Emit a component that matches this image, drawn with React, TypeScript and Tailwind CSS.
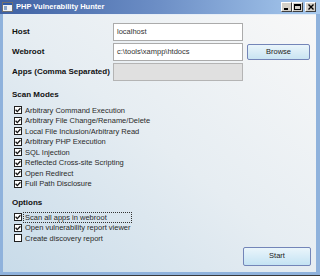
import { useState } from "react";

type Option = {
    label: string;
    checked: boolean;
};

const scanModes: Option[] = [
    { label: "Arbitrary Command Execution", checked: true },
    { label: "Arbitrary File Change/Rename/Delete", checked: true },
    { label: "Local File Inclusion/Arbitrary Read", checked: true },
    { label: "Arbitrary PHP Execution", checked: true },
    { label: "SQL Injection", checked: true },
    { label: "Reflected Cross-site Scripting", checked: true },
    { label: "Open Redirect", checked: true },
    { label: "Full Path Disclosure", checked: true },
];

const options: Option[] = [
    { label: "Scan all apps in webroot", checked: true },
    { label: "Open vulnerability report viewer", checked: true },
    { label: "Create discovery report", checked: false },
];

const CheckRow = ({ label, checked, focused, onToggle }: { label: string; checked: boolean; focused?: boolean; onToggle: () => void }) => (
    <div className="flex items-center h-[10.5px] cursor-default" onClick={onToggle}>
        <div className="w-[8px] h-[8px] border border-[#1f1f1f] bg-white flex items-center justify-center shrink-0">
            {checked && (
                <svg width="6" height="6" viewBox="0 0 6 6">
                    <path d="M0.6 2.8 L2.3 4.6 L5.4 1.2" stroke="#111" strokeWidth="1.3" fill="none" />
                </svg>
            )}
        </div>
        <span
            className={`ml-[2px] px-[1px] leading-[9px] text-[7.5px] text-[#2a2a2a] ${focused ? "outline-1 outline-dotted outline-[#333] pr-[24px]" : ""}`}
        >
            {label}
        </span>
    </div>
);

const WinButton = ({ children }: { children: React.ReactNode }) => (
    <div className="w-[11px] h-[10px] bg-[#d4d0c8] border border-t-white border-l-white border-r-[#404040] border-b-[#404040] flex items-center justify-center">
        {children}
    </div>
);

const App = () => {
    const [modes, setModes] = useState(scanModes);
    const [opts, setOpts] = useState(options);

    return (
        <div className="w-[320px] h-[276px] flex flex-col bg-[#8fb2dc] border-b border-[#3a3a3a] font-['Liberation_Sans',Arial,sans-serif] overflow-hidden">
            {/* title bar */}
            <div className="h-[14px] flex items-center bg-gradient-to-r from-[#3f61a3] via-[#6d8fc6] to-[#a9cbef] px-[2px]">
                <svg width="11" height="10" viewBox="0 0 11 10" className="shrink-0">
                    <rect x="0.5" y="0.5" width="10" height="9" fill="#f2f2f2" stroke="#707070" />
                    <rect x="1" y="1" width="9" height="2" fill="#2f5aa8" />
                    <rect x="2" y="4" width="3" height="4" fill="#8aa6cc" />
                </svg>
                <span className="ml-[3px] text-white font-bold text-[7.5px] leading-none">PHP Vulnerability Hunter</span>
                <div className="ml-auto flex items-center mr-[2px]">
                    <WinButton>
                        <div className="w-[4px] h-[2px] bg-black mt-[4px] -ml-[1px]" />
                    </WinButton>
                    <WinButton>
                        <div className="w-[7px] h-[6px] border border-black border-t-2" />
                    </WinButton>
                    <div className="w-[2px]" />
                    <WinButton>
                        <svg width="6" height="6" viewBox="0 0 6 6">
                            <path d="M0.5 0.5 L5.5 5.5 M5.5 0.5 L0.5 5.5" stroke="#000" strokeWidth="1.4" />
                        </svg>
                    </WinButton>
                </div>
            </div>

            {/* client area */}
            <div className="flex-1 ml-[3px] mr-[4px] mb-[3px] border-t border-[#e6eef7] bg-gradient-to-tr from-[#c8dbe9] via-[#e6edf2] to-[#f8f8f8] pl-[9px] pr-[5px] pt-[8px] flex flex-col">
                <div className="flex items-center h-[18px]">
                    <span className="w-[101px] text-[8px] font-bold text-[#111]">Host</span>
                    <div className="w-[130px] h-[18px] bg-white border border-[#ababab] flex items-center px-[3px] text-[7.5px] text-[#333]">localhost</div>
                </div>
                <div className="flex items-center h-[18px] mt-[2px]">
                    <span className="w-[101px] text-[8px] font-bold text-[#111]">Webroot</span>
                    <div className="w-[130px] h-[18px] bg-white border border-[#ababab] flex items-center px-[3px] text-[7.5px] text-[#333]">c:\tools\xampp\htdocs</div>
                    <button className="ml-[4px] w-[63px] h-[16px] rounded-[2px] border border-[#7385b8] bg-gradient-to-b from-[#eaf5fb] to-[#c9e4f2] text-[7.5px] text-[#222]">
                        Browse
                    </button>
                </div>
                <div className="flex items-center h-[18px] mt-[2px]">
                    <span className="w-[101px] text-[8px] font-bold text-[#111]">Apps (Comma Separated)</span>
                    <div className="w-[130px] h-[18px] bg-[#e0e0e0] border border-[#b4b4b4]" />
                </div>

                <div className="mt-[9px] h-[10px] flex items-center text-[8px] font-bold text-[#111]">Scan Modes</div>
                <div className="mt-[5px] pl-[2px] flex flex-col">
                    {modes.map((m, i) => (
                        <CheckRow
                            key={m.label}
                            label={m.label}
                            checked={m.checked}
                            onToggle={() => setModes(modes.map((x, j) => (j === i ? { ...x, checked: !x.checked } : x)))}
                        />
                    ))}
                </div>

                <div className="mt-[9px] h-[10px] flex items-center text-[8px] font-bold text-[#111]">Options</div>
                <div className="mt-[4px] pl-[2px] flex flex-col">
                    {opts.map((o, i) => (
                        <CheckRow
                            key={o.label}
                            label={o.label}
                            checked={o.checked}
                            focused={i === 0}
                            onToggle={() => setOpts(opts.map((x, j) => (j === i ? { ...x, checked: !x.checked } : x)))}
                        />
                    ))}
                </div>

                <div className="flex justify-end mt-[3px]">
                    <button className="w-[68px] h-[19px] rounded-[2px] border border-[#7385b8] bg-gradient-to-b from-[#eaf5fb] to-[#c4e3f3] text-[7.5px] text-[#222]">
                        Start
                    </button>
                </div>
            </div>
        </div>
    );
};

export default App;
